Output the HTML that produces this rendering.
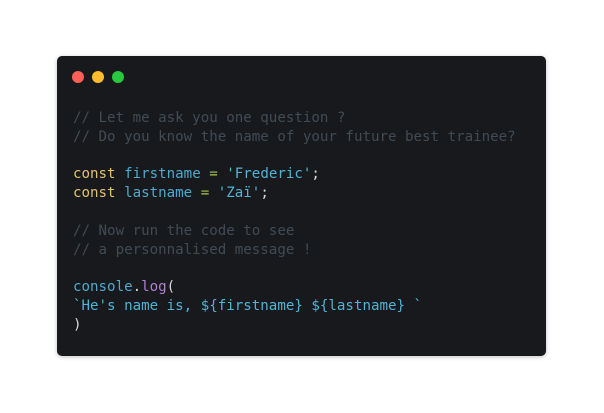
<!DOCTYPE html>
<html><head><meta charset="utf-8"><style>
html,body{margin:0;padding:0;background:#fff;width:604px;height:413px;overflow:hidden}
.card{position:absolute;left:57px;top:56px;width:489px;height:300px;background:#18191c;border-radius:5px;box-shadow:0 1px 4px rgba(0,0,0,.25)}
.dot{position:absolute;top:15px;width:12px;height:12px;border-radius:50%}
pre{position:absolute;left:16px;top:53px;margin:0;font-family:"DejaVu Sans Mono","Liberation Mono",monospace;font-size:14.15px;line-height:18.8px;color:#d4d4d4}
.c{color:#404b55}.k{color:#e2c26e}.v{color:#4fa9cc}.o{color:#a6c84e}.s{color:#4fb3d6}.f{color:#b07fd0}.p{color:#d8d8d8}
</style></head><body>
<div class="card">
<div class="dot" style="left:15px;background:#fe5f57"></div>
<div class="dot" style="left:35px;background:#febc2e"></div>
<div class="dot" style="left:55px;background:#28c840"></div>
<pre><span class="c">// Let me ask you one question ?
// Do you know the name of your future best trainee?</span>

<span class="k">const</span> <span class="v">firstname</span> <span class="o">=</span> <span class="s">'Frederic'</span><span class="p">;</span>
<span class="k">const</span> <span class="v">lastname</span> <span class="o">=</span> <span class="s">'Zaï'</span><span class="p">;</span>

<span class="c">// Now run the code to see
// a personnalised message !</span>

<span class="v">console</span><span class="p">.</span><span class="f">log</span><span class="p">(</span>
<span class="s">`He's name is, ${firstname} ${lastname} `</span>
<span class="p">)</span></pre>
</div>
</body></html>
